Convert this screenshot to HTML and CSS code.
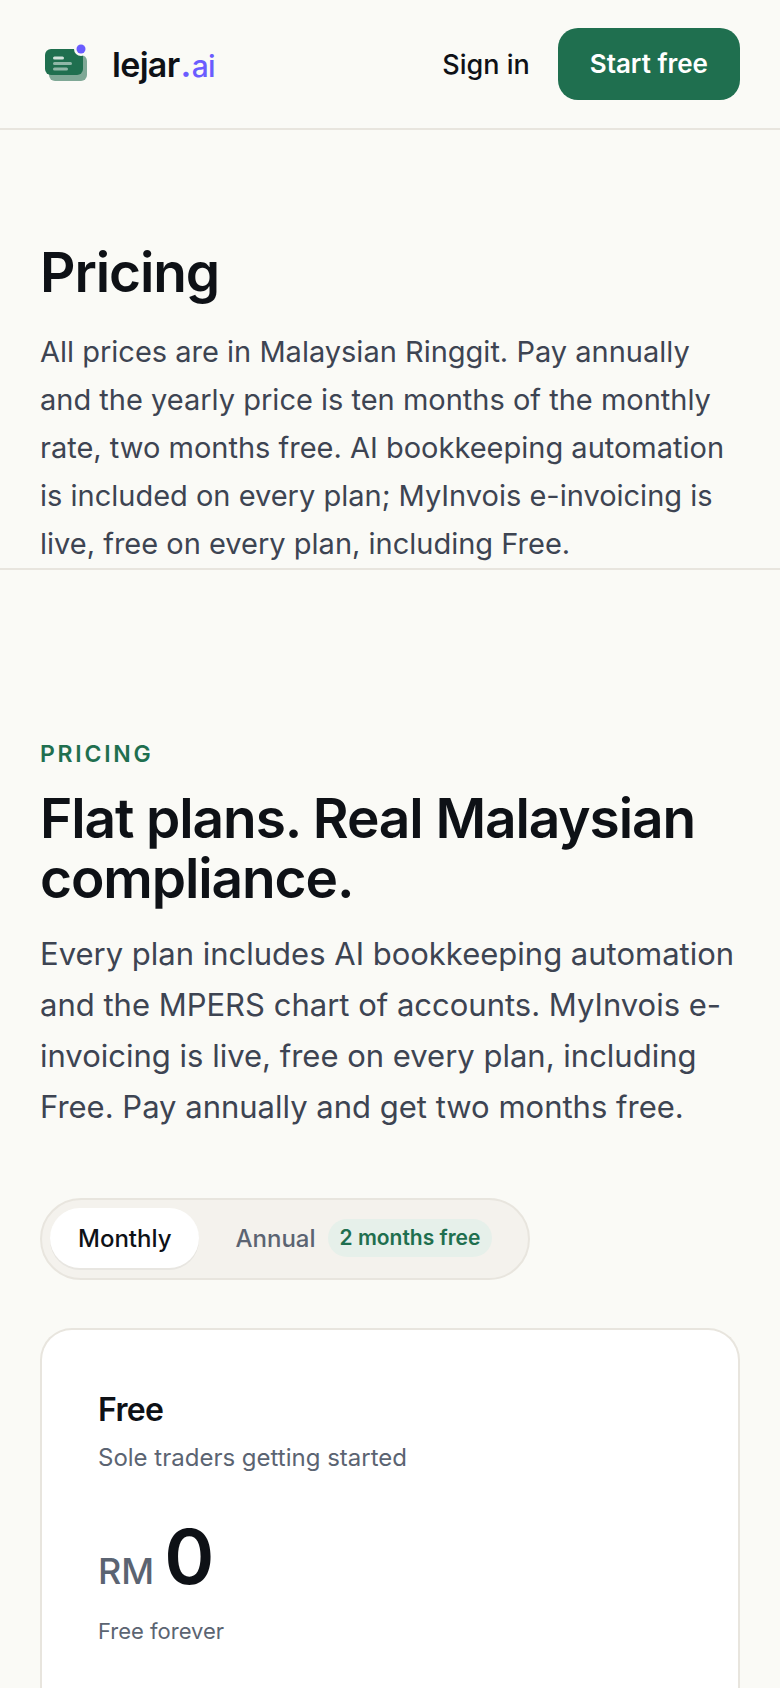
FILE: index.html
```html
<!DOCTYPE html>
<html lang="en">
<head>
    <meta charset="UTF-8">
    <meta name="viewport" content="width=device-width, initial-scale=1.0">
    <title>Pricing - lejar.ai</title>
    <link rel="stylesheet" href="styles.css">
</head>
<body>

    <header class="site-header">
        <a href="#" class="brand">
            <svg class="brand-mark" viewBox="0 0 56 56" aria-hidden="true">
                <rect x="9" y="19" width="38" height="26" rx="6" fill="#7fa896"/>
                <rect x="5" y="13" width="38" height="26" rx="6" fill="#1f6f4f"/>
                <circle cx="41" cy="13" r="7" fill="#fafaf6"/>
                <circle cx="41" cy="13" r="4.5" fill="#6a5cff"/>
                <g stroke="#ffffff" stroke-width="3" stroke-linecap="round">
                    <path d="M14.5 22h8" opacity="0.8"/>
                    <path d="M14.5 27.5h16" opacity="0.5"/>
                    <path d="M14.5 33h12" opacity="0.5"/>
                </g>
            </svg>
            <span class="brand-name">lejar<span class="brand-dot">.</span><span class="brand-tld">ai</span></span>
        </a>
        <nav class="site-nav">
            <a href="#" class="sign-in">Sign in</a>
            <a href="#" class="start-free">Start free</a>
        </nav>
    </header>

    <main>
        <section class="intro">
            <h1>Pricing</h1>
            <p>All prices are in Malaysian Ringgit. Pay annually and the yearly price is ten months of the monthly rate, two months free. AI bookkeeping automation is included on every plan; MyInvois e-invoicing is live, free on every plan, including Free.</p>
        </section>

        <section class="plans">
            <p class="eyebrow">Pricing</p>
            <h2>Flat plans. Real Malaysian compliance.</h2>
            <p class="lead">Every plan includes AI bookkeeping automation and the MPERS chart of accounts. MyInvois e-<wbr>invoicing is live, free on every plan, including Free. Pay annually and get two months free.</p>

            <div class="billing-toggle" role="group" aria-label="Billing period">
                <button type="button" class="active" aria-pressed="true">Monthly</button>
                <button type="button" aria-pressed="false">Annual <span class="badge">2 months free</span></button>
            </div>

            <article class="plan-card">
                <h3>Free</h3>
                <p class="plan-audience">Sole traders getting started</p>
                <p class="price"><span class="currency">RM</span><span class="amount">0</span></p>
                <p class="price-note">Free forever</p>
            </article>
        </section>
    </main>

</body>
</html>
```
FILE: styles.css
```css
* {
    box-sizing: border-box;
}
body {
    margin: 0;
    font-family: Inter, "Liberation Sans", sans-serif;
    background-color: #fafaf6;
    color: #0e1116;
}
h1, h2, h3, p {
    margin: 0;
}
a {
    color: inherit;
    text-decoration: none;
}

/* Header */
.site-header {
    display: flex;
    justify-content: space-between;
    align-items: center;
    padding: 28px 40px;
    border-bottom: 2px solid #e8e5de;
}
.brand {
    display: flex;
    align-items: center;
    gap: 16px;
}
.brand-mark {
    width: 56px;
    height: 56px;
}
.brand-name {
    font-size: 34px;
    font-weight: 600;
    letter-spacing: -0.02em;
}
.brand-dot {
    margin: 0 1px;
    color: #6a5cff;
}
.brand-tld {
    color: #6a5cff;
    font-size: 30px;
    font-weight: 500;
}
.site-nav {
    display: flex;
    align-items: center;
    gap: 28px;
    font-size: 26px;
}
.sign-in {
    font-size: 27px;
    font-weight: 500;
}
.start-free {
    padding: 0 32px;
    border-radius: 20px;
    background-color: #1f6f4f;
    color: #ffffff;
    font-weight: 600;
    line-height: 72px;
}

/* Page intro */
.intro {
    padding: 112px 40px 0;
    border-bottom: 2px solid #e8e5de;
}
h1, h2 {
    font-size: 55px;
    font-weight: 600;
    line-height: 60px;
    letter-spacing: -0.02em;
}
.intro p {
    margin-top: 26px;
    color: #3d4452;
    font-size: 29px;
    line-height: 48px;
}

/* Plans */
.plans {
    padding: 164px 40px 0;
}
.eyebrow {
    color: #1f6f4f;
    font-size: 23px;
    font-weight: 600;
    line-height: 40px;
    letter-spacing: 0.12em;
    text-transform: uppercase;
}
h2 {
    margin-top: 14px;
}
.lead {
    margin-top: 20px;
    color: #3d4452;
    font-size: 31px;
    line-height: 51px;
}
.billing-toggle {
    display: inline-flex;
    margin-top: 66px;
    padding: 8px 8px 10px;
    gap: 8px;
    border: 2px solid #e8e5de;
    border-radius: 41px;
    background-color: #f4f2ed;
}
.billing-toggle button {
    display: flex;
    align-items: center;
    gap: 12px;
    height: 60px;
    padding: 0 28px;
    border: none;
    border-radius: 30px;
    background: none;
    color: #5b6472;
    font: 500 24px Inter, "Liberation Sans", sans-serif;
    cursor: pointer;
}
.billing-toggle .active {
    background-color: #ffffff;
    color: #0e1116;
    box-shadow: 0 2px 0 rgba(14, 17, 22, 0.05);
}
.badge {
    padding: 0 12px;
    border-radius: 19px;
    background-color: #e6f0ea;
    color: #1f6f4f;
    font-size: 21px;
    font-weight: 600;
    line-height: 38px;
}

/* Plan card, its lower edge runs on below the fold */
.plan-card {
    margin-top: 48px;
    padding: 56px;
    border: 2px solid #e8e5de;
    border-bottom: none;
    border-radius: 32px 32px 0 0;
    background-color: #ffffff;
}
h3 {
    font-size: 32px;
    font-weight: 600;
    line-height: 48px;
    letter-spacing: -0.02em;
}
.plan-audience {
    margin-top: 4px;
    color: #5b6472;
    font-size: 24px;
    line-height: 40px;
}
.price {
    display: flex;
    align-items: baseline;
    gap: 10px;
    margin-top: 38px;
    line-height: 80px;
}
.currency {
    color: #5b6472;
    font-size: 36px;
    font-weight: 500;
}
.amount {
    font-size: 76px;
    font-weight: 600;
}
.price-note {
    margin-top: 2px;
    padding-bottom: 16px;
    color: #5b6472;
    font-size: 22px;
    line-height: 36px;
}
```
